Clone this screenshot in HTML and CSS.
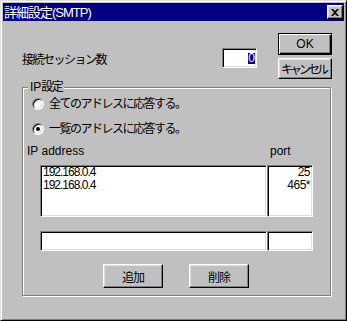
FILE: index.html
```html
<!DOCTYPE html>
<html lang="ja">
<head>
    <meta charset="UTF-8">
    <title>詳細設定(SMTP)</title>
    <link rel="stylesheet" href="styles.css">
</head>
<body>
    <div class="window">
        <div class="titlebar">
            <span class="title">詳細設定(SMTP)</span>
            <span class="close-btn">
                <svg width="8" height="7" viewBox="0 0 8 7"><path d="M0 0h2l2 2 2-2h2L5 3.5 8 7H6L4 5 2 7H0l3-3.5z" fill="#000"/></svg>
            </span>
        </div>

        <div class="content">
            <div class="top">
                <div class="session">
                    <span class="jp session-label">接続セッション数</span>
                    <span class="edit session-input"><span class="sel">0</span></span>
                </div>
                <div class="actions">
                    <button class="btn btn-default">OK</button>
                    <button class="btn btn-cancel jp">キャンセル</button>
                </div>
            </div>

            <div class="group">
                <span class="group-title">IP<span class="jp">設定</span></span>
                <div class="radio-row">
                    <span class="radio"></span>
                    <span class="jp">全てのアドレスに応答する。</span>
                </div>
                <div class="radio-row">
                    <span class="radio checked"></span>
                    <span class="jp">一覧のアドレスに応答する。</span>
                </div>
                <div class="list-head">
                    <span class="head-ip">IP address</span>
                    <span>port</span>
                </div>
                <div class="pair lists">
                    <div class="edit list-ip">192.168.0.4<br>192.168.0.4</div>
                    <div class="edit list-port">25<br>465*</div>
                </div>
                <div class="pair inputs">
                    <div class="edit input-ip"></div>
                    <div class="edit input-port"></div>
                </div>
                <div class="group-actions">
                    <button class="btn btn-wide jp">追加</button>
                    <button class="btn btn-wide jp">削除</button>
                </div>
            </div>
        </div>
    </div>
</body>
</html>
```

FILE: styles.css
```css
body {
    margin: 0;
    font-family: "Liberation Sans", "Noto Sans CJK JP", sans-serif;
    font-size: 12px;
    color: #000;
}

.window {
    width: 347px;
    height: 321px;
    box-sizing: border-box;
    padding: 2px;
    background-color: #c0c0c0;
    border: 1px solid;
    border-color: #dfdfdf #000 #000 #dfdfdf;
    box-shadow: inset 1px 1px #fff, inset -1px -1px #808080;
}

.jp {
    letter-spacing: -1.5px;
}

/* title bar */
.titlebar {
    height: 18px;
    display: flex;
    align-items: center;
    padding: 0 1px 0 1px;
    background-color: #000080;
}

.title {
    flex: 1;
    color: #fff;
    font-size: 13px;
    line-height: 15px;
    letter-spacing: -1px;
}

.close-btn {
    width: 16px;
    height: 14px;
    box-sizing: border-box;
    display: flex;
    align-items: center;
    justify-content: center;
    background-color: #c0c0c0;
    border: 1px solid;
    border-color: #fff #000 #000 #fff;
    box-shadow: inset -1px -1px #808080, inset 1px 1px #dfdfdf;
}

/* content */
.content {
    padding: 0 12px 0 19px;
}

.top {
    height: 66px;
    display: flex;
}

.session {
    margin-top: 27px;
    height: 20px;
    display: flex;
    align-items: center;
}

.session-label {
    width: 200px;
    line-height: 14px;
    padding-top: 3px;
}

.edit {
    box-sizing: border-box;
    background-color: #fff;
    border: 1px solid;
    border-color: #808080 #fff #fff #808080;
    box-shadow: inset 1px 1px #000, inset -1px -1px #dfdfdf;
}

.session-input {
    width: 35px;
    height: 20px;
    display: flex;
    align-items: center;
    justify-content: flex-end;
    padding-right: 1px;
}

.sel {
    display: inline-block;
    width: 7px;
    height: 11px;
    line-height: 11px;
    text-align: center;
    background-color: #000080;
    color: #fff;
}

.actions {
    margin-left: auto;
    margin-top: 12px;
    display: flex;
    flex-direction: column;
    gap: 3px;
}

.btn {
    font-family: "Liberation Sans", "Noto Sans CJK JP", sans-serif;
    font-size: 12px;
    color: #000;
    padding: 0;
    box-sizing: border-box;
    background-color: #c0c0c0;
    border: 1px solid;
    border-color: #fff #000 #000 #fff;
    box-shadow: inset -1px -1px #808080, inset 1px 1px #dfdfdf;
}

.btn-default {
    width: 54px;
    height: 22px;
    border-color: #000;
    box-shadow: inset 1px 1px #fff, inset -1px -1px #000, inset -2px -2px #808080;
}

.btn-cancel {
    width: 54px;
    height: 21px;
    letter-spacing: -3px;
    padding-right: 3px;
}

/* group box */
.group {
    position: relative;
    width: 309px;
    height: 209px;
    box-sizing: border-box;
    border: 1px solid #808080;
    box-shadow: inset 1px 1px #fff, 1px 1px #fff;
}

.group-title {
    position: absolute;
    top: -8px;
    left: 5px;
    padding: 0 2px;
    line-height: 14px;
    background-color: #c0c0c0;
}

.radio-row {
    height: 16px;
    margin-top: 9px;
    padding-left: 9px;
    display: flex;
    align-items: center;
    line-height: 14px;
}

.radio-row:first-of-type {
    margin-top: 8px;
}

.radio {
    width: 12px;
    height: 12px;
    flex: none;
    margin-right: 5px;
    box-sizing: border-box;
    border-radius: 50%;
    background-color: #fff;
    border: 1px solid;
    border-color: #808080 #fff #fff #808080;
    box-shadow: inset 1px 1px #000, inset -1px -1px #dfdfdf;
    display: flex;
    align-items: center;
    justify-content: center;
}

.radio.checked::after {
    content: "";
    width: 4px;
    height: 4px;
    border-radius: 50%;
    background-color: #000;
}

.list-head {
    height: 16px;
    margin-top: 6px;
    padding-left: 4px;
    display: flex;
    align-items: center;
}

.head-ip {
    width: 243px;
}

.pair {
    display: flex;
    margin-left: 17px;
}

.lists {
    margin-top: 6px;
    height: 52px;
}

.list-ip {
    width: 227px;
    padding-left: 2px;
    line-height: 13px;
    letter-spacing: -1px;
}

.list-port {
    width: 46px;
    padding-right: 2px;
    text-align: right;
    line-height: 13px;
    letter-spacing: -0.5px;
}

.inputs {
    margin-top: 14px;
    height: 20px;
}

.input-ip {
    width: 227px;
}

.input-port {
    width: 46px;
}

.group-actions {
    margin-top: 13px;
    padding-left: 80px;
    display: flex;
    gap: 26px;
}

.btn-wide {
    width: 60px;
    height: 24px;
    letter-spacing: -1px;
}
```
